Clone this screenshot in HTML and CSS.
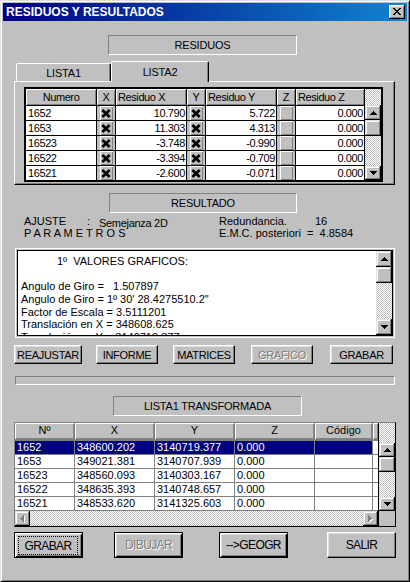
FILE: index.html
```html
<!DOCTYPE html>
<html lang="es">
<head>
<meta charset="utf-8">
<title>RESIDUOS Y RESULTADOS</title>
<link rel="stylesheet" href="styles.css">
</head>
<body>
<div class="window">
  <div class="titlebar">
    <span class="title">RESIDUOS Y RESULTADOS</span>
    <span class="close-btn"><svg width="8" height="7" viewBox="0 0 8 7" shape-rendering="crispEdges"><path d="M0 0h2v1H0zM6 0h2v1H6zM1 1h2v1H1zM5 1h2v1H5zM2 2h4v1H2zM3 3h2v1H3zM2 4h4v1H2zM1 5h2v1H1zM5 5h2v1H5zM0 6h2v1H0zM6 6h2v1H6z" fill="#000"/></svg></span>
  </div>

  <div class="label lbl-residuos">RESIDUOS</div>

  <div class="tabs">
    <div class="tab tab1">LISTA1</div>
    <div class="tab tab2">LISTA2</div>
  </div>
  <div class="panel">
    <div class="grid1">
      <div class="hd c">Numero</div>
      <div class="hd c">X</div>
      <div class="hd">Residuo X</div>
      <div class="hd c">Y</div>
      <div class="hd">Residuo Y</div>
      <div class="hd c">Z</div>
      <div class="hd">Residuo Z</div>
      <div class="vsb vsb1">
        <div class="sb-corner dither"></div>
        <div class="sb-btn up1"><svg width="7" height="4" viewBox="0 0 7 4" shape-rendering="crispEdges"><path d="M3 0h1v1h1v1h1v1h1v1H0V3h1V2h1V1h1z"/></svg></div>
        <div class="sb-thumb th1"></div>
        <div class="sb-track dither"></div>
        <div class="sb-btn dn1"><svg width="7" height="4" viewBox="0 0 7 4" shape-rendering="crispEdges"><path d="M0 0h7v1H6v1H5v1H4v1H3V3H2V2H1V1H0z"/></svg></div>
      </div>

      <div class="cell">1652</div>
      <div class="chk"><span class="box"><svg width="10" height="9" viewBox="0 0 10 9"><path d="M1.3 1L8.7 8M8.7 1L1.3 8" stroke="#000" stroke-width="2.7"/></svg></span></div>
      <div class="cell r">10.790</div>
      <div class="chk"><span class="box"><svg width="10" height="9" viewBox="0 0 10 9"><path d="M1.3 1L8.7 8M8.7 1L1.3 8" stroke="#000" stroke-width="2.7"/></svg></span></div>
      <div class="cell r">5.722</div>
      <div class="chk"><span class="box"></span></div>
      <div class="cell r">0.000</div>

      <div class="cell">1653</div>
      <div class="chk"><span class="box"><svg width="10" height="9" viewBox="0 0 10 9"><path d="M1.3 1L8.7 8M8.7 1L1.3 8" stroke="#000" stroke-width="2.7"/></svg></span></div>
      <div class="cell r">11.303</div>
      <div class="chk"><span class="box"><svg width="10" height="9" viewBox="0 0 10 9"><path d="M1.3 1L8.7 8M8.7 1L1.3 8" stroke="#000" stroke-width="2.7"/></svg></span></div>
      <div class="cell r">4.313</div>
      <div class="chk"><span class="box"></span></div>
      <div class="cell r">0.000</div>

      <div class="cell">16523</div>
      <div class="chk"><span class="box"><svg width="10" height="9" viewBox="0 0 10 9"><path d="M1.3 1L8.7 8M8.7 1L1.3 8" stroke="#000" stroke-width="2.7"/></svg></span></div>
      <div class="cell r">-3.748</div>
      <div class="chk"><span class="box"><svg width="10" height="9" viewBox="0 0 10 9"><path d="M1.3 1L8.7 8M8.7 1L1.3 8" stroke="#000" stroke-width="2.7"/></svg></span></div>
      <div class="cell r">-0.990</div>
      <div class="chk"><span class="box"></span></div>
      <div class="cell r">0.000</div>

      <div class="cell">16522</div>
      <div class="chk"><span class="box"><svg width="10" height="9" viewBox="0 0 10 9"><path d="M1.3 1L8.7 8M8.7 1L1.3 8" stroke="#000" stroke-width="2.7"/></svg></span></div>
      <div class="cell r">-3.394</div>
      <div class="chk"><span class="box"><svg width="10" height="9" viewBox="0 0 10 9"><path d="M1.3 1L8.7 8M8.7 1L1.3 8" stroke="#000" stroke-width="2.7"/></svg></span></div>
      <div class="cell r">-0.709</div>
      <div class="chk"><span class="box"></span></div>
      <div class="cell r">0.000</div>

      <div class="cell">16521</div>
      <div class="chk"><span class="box"><svg width="10" height="9" viewBox="0 0 10 9"><path d="M1.3 1L8.7 8M8.7 1L1.3 8" stroke="#000" stroke-width="2.7"/></svg></span></div>
      <div class="cell r">-2.600</div>
      <div class="chk"><span class="box"><svg width="10" height="9" viewBox="0 0 10 9"><path d="M1.3 1L8.7 8M8.7 1L1.3 8" stroke="#000" stroke-width="2.7"/></svg></span></div>
      <div class="cell r">-0.071</div>
      <div class="chk"><span class="box"></span></div>
      <div class="cell r">0.000</div>
    </div>
  </div>

  <div class="label lbl-resultado">RESULTADO</div>

  <div class="info">
    <div>AJUSTE</div>
    <div>:</div>
    <div class="semej">Semejanza 2D</div>
    <div>Redundancia.</div>
    <div>16</div>
    <div class="params">P A R A M E T R O S</div>
    <div class="emc">E.M.C. posteriori&nbsp;&nbsp;=&nbsp;&nbsp;4.8584</div>
  </div>

  <div class="memo">
    <div class="memo-in">
      <div class="memo-text">
        <div class="ml ind">1º&nbsp;&nbsp;VALORES GRAFICOS:</div>
        <div class="ml">&nbsp;</div>
        <div class="ml">Angulo de Giro =&nbsp;&nbsp;&nbsp;1.507897</div>
        <div class="ml">Angulo de Giro = 1º 30' 28.4275510.2"</div>
        <div class="ml">Factor de Escala = 3.5111201</div>
        <div class="ml">Translación en X = 348608.625</div>
        <div class="ml">Translación en Y = 3140719.377</div>
      </div>
      <div class="vsb memo-sb">
        <div class="sb-btn mup"><svg width="7" height="4" viewBox="0 0 7 4" shape-rendering="crispEdges"><path d="M3 0h1v1h1v1h1v1h1v1H0V3h1V2h1V1h1z"/></svg></div>
        <div class="sb-thumb mth"></div>
        <div class="sb-track dither"></div>
        <div class="sb-btn mdn"><svg width="7" height="4" viewBox="0 0 7 4" shape-rendering="crispEdges"><path d="M0 0h7v1H6v1H5v1H4v1H3V3H2V2H1V1H0z"/></svg></div>
      </div>
    </div>
  </div>

  <div class="btnrow">
    <div class="btn b-reaj">REAJUSTAR</div>
    <div class="btn b-inf">INFORME</div>
    <div class="btn b-mat">MATRICES</div>
    <div class="btn b-gra dis">GRAFICO</div>
    <div class="btn b-grab">GRABAR</div>
  </div>

  <div class="progress"></div>

  <div class="label lbl-lista">LISTA1 TRANSFORMADA</div>

  <div class="grid2">
    <div class="g2-top">
      <div class="g2-table">
        <div class="hd2">Nº</div>
        <div class="hd2">X</div>
        <div class="hd2">Y</div>
        <div class="hd2">Z</div>
        <div class="hd2">Código</div>
        <div class="hd2 extra"></div>

        <div class="d2 sel">1652</div>
        <div class="d2 sel">348600.202</div>
        <div class="d2 sel">3140719.377</div>
        <div class="d2 sel">0.000</div>
        <div class="d2 sel"></div>
        <div class="d2"></div>

        <div class="d2">1653</div>
        <div class="d2">349021.381</div>
        <div class="d2">3140707.939</div>
        <div class="d2">0.000</div>
        <div class="d2"></div>
        <div class="d2"></div>

        <div class="d2">16523</div>
        <div class="d2">348560.093</div>
        <div class="d2">3140303.167</div>
        <div class="d2">0.000</div>
        <div class="d2"></div>
        <div class="d2"></div>

        <div class="d2">16522</div>
        <div class="d2">348635.393</div>
        <div class="d2">3140748.657</div>
        <div class="d2">0.000</div>
        <div class="d2"></div>
        <div class="d2"></div>

        <div class="d2">16521</div>
        <div class="d2">348533.620</div>
        <div class="d2">3141325.603</div>
        <div class="d2">0.000</div>
        <div class="d2"></div>
        <div class="d2"></div>
      </div>
      <div class="vsb vsb2">
        <div class="sb-corner2 dither"></div>
        <div class="sb-btn up2"><svg width="7" height="4" viewBox="0 0 7 4" shape-rendering="crispEdges"><path d="M3 0h1v1h1v1h1v1h1v1H0V3h1V2h1V1h1z"/></svg></div>
        <div class="sb-thumb th2"></div>
        <div class="sb-track dither"></div>
        <div class="sb-btn dn2"><svg width="7" height="4" viewBox="0 0 7 4" shape-rendering="crispEdges"><path d="M0 0h7v1H6v1H5v1H4v1H3V3H2V2H1V1H0z"/></svg></div>
      </div>
    </div>
    <div class="hsb">
      <div class="hsb-main">
        <div class="sb-btn hl"><svg width="5" height="8" viewBox="0 0 5 8" shape-rendering="crispEdges"><path transform="translate(1 1)" fill="#fff" d="M3 0h1v7H3V6H2V5H1V4H0V3h1V2h1V1h1z"/><path fill="#808080" d="M3 0h1v7H3V6H2V5H1V4H0V3h1V2h1V1h1z"/></svg></div>
        <div class="sb-track dither"></div>
        <div class="sb-btn hr"><svg width="5" height="8" viewBox="0 0 5 8" shape-rendering="crispEdges"><path transform="translate(1 1)" fill="#fff" d="M0 0h1v1h1v1h1v1h1v1H3v1H2v1H1v1H0z"/><path fill="#808080" d="M0 0h1v1h1v1h1v1h1v1H3v1H2v1H1v1H0z"/></svg></div>
      </div>
      <div class="hsb-corner"></div>
    </div>
  </div>

  <div class="btnrow2">
    <div class="btn2 framed b2-grab"><span class="focus">GRABAR</span></div>
    <div class="btn2 framed dis b2-dib">DIBUJAR</div>
    <div class="btn2 framed b2-geo">--&gt;GEOGR</div>
    <div class="btn2 b2-sal">SALIR</div>
  </div>
</div>
</body>
</html>
```

FILE: styles.css
```css
* { box-sizing: border-box; }
html, body { margin: 0; padding: 0; }
body {
  width: 410px;
  height: 582px;
  overflow: hidden;
  background: #c0c0c0;
  font-family: "Liberation Sans", Arial, sans-serif;
  font-size: 11px;
  color: #000;
}

.window {
  width: 410px;
  height: 582px;
  background: #c0c0c0;
  border: 1px solid;
  border-color: #dfdfdf #000 #000 #dfdfdf;
  box-shadow: inset 1px 1px #fff, inset -1px -1px #808080;
  padding: 2px;
  display: flex;
  flex-direction: column;
  align-items: flex-start;
}

/* title bar */
.titlebar {
  width: 100%;
  height: 18px;
  flex: none;
  background: linear-gradient(to right, #000080, #1084d0);
  display: flex;
  align-items: center;
  justify-content: space-between;
  padding: 0 2px 0 3px;
}
.title {
  color: #fff;
  font-weight: bold;
  font-size: 12px;
  line-height: 14px;
}
.close-btn {
  width: 16px;
  height: 14px;
  background: #c0c0c0;
  box-shadow: inset -1px -1px #000, inset 1px 1px #fff, inset -2px -2px #808080, inset 2px 2px #dfdfdf;
  display: flex;
  align-items: center;
  justify-content: center;
  padding: 0 0 1px 0;
}
.close-btn svg { display: block; }

/* caption labels */
.label {
  flex: none;
  height: 20px;
  width: 189px;
  border: 1px solid;
  border-color: #808080 #fff #fff #808080;
  text-align: center;
  line-height: 18px;
  letter-spacing: -0.2px;
}
.lbl-residuos { margin: 14px 0 0 105px; }
.lbl-resultado { margin: 8px 0 0 106px; width: 188px; }
.lbl-lista { margin: 11px 0 0 110px; }

/* tabs */
.tabs {
  flex: none;
  display: flex;
  align-items: flex-end;
  height: 20px;
  margin: 6px 0 0 13px;
}
.tab {
  background: #c0c0c0;
  border: 1px solid;
  border-bottom: none;
  border-color: #fff #000 transparent #fff;
  box-shadow: inset -1px 0 #808080;
  border-radius: 2px 2px 0 0;
  text-align: center;
  line-height: 13px;
  letter-spacing: -0.2px;
}
.tab1 { width: 95px; height: 18px; padding-top: 3px; }
.tab2 {
  width: 98px;
  height: 21px;
  margin-bottom: -1px;
  padding-top: 4px;
  position: relative;
  z-index: 1;
}

.panel {
  flex: none;
  margin-left: 11px;
  width: 381px;
  height: 104px;
  border: 1px solid;
  border-color: #fff #000 #000 #fff;
  box-shadow: inset -1px -1px #808080;
  padding: 5px 0 0 9px;
}

/* grid 1 */
.grid1 {
  display: grid;
  grid-template-columns: 70px 18px 70px 18px 70px 18px 68px 16px;
  grid-template-rows: 16px repeat(5, 14px);
  gap: 1px;
  background: #000;
  border: 2px solid #000;
  width: 359px;
  letter-spacing: -0.4px;
}
.hd {
  background: #c0c0c0;
  box-shadow: inset 1px 1px #fff, inset -1px -1px #808080;
  line-height: 16px;
  padding: 0 2px;
  white-space: nowrap;
  overflow: hidden;
}
.c { text-align: center; }
.cell {
  background: #fff;
  padding: 0 2px 0 2px;
  line-height: 14px;
  white-space: nowrap;
  overflow: hidden;
}
.r { text-align: right; padding-right: 1px; }
.chk {
  background: #c0c0c0;
  display: flex;
  justify-content: center;
}
.box {
  width: 13px;
  height: 100%;
  box-shadow: inset 1px 1px #fff, inset -1px -1px #808080;
  display: flex;
  align-items: center;
  justify-content: center;
}
.box svg { display: block; }

/* scrollbars */
.dither {
  background-color: #fff;
  background-image: repeating-conic-gradient(#c0c0c0 0 25%, #fff 0 50%);
  background-size: 2px 2px;
}
.vsb {
  display: flex;
  flex-direction: column;
}
.vsb1 {
  grid-column: 8;
  grid-row: 1 / span 6;
}
.sb-btn, .sb-thumb {
  flex: none;
  background: #c0c0c0;
  box-shadow: inset -1px -1px #000, inset 1px 1px #dfdfdf, inset -2px -2px #808080, inset 2px 2px #fff;
  display: flex;
  align-items: center;
  justify-content: center;
}
.sb-btn svg { display: block; }
.sb-track { flex: 1; }
.sb-corner { height: 16px; flex: none; }
.up1 { height: 15px; }
.th1 { height: 16px; }
.dn1 { height: 14px; }

/* info lines */
.info {
  flex: none;
  display: grid;
  grid-template-columns: 63px 12px 120px 96px 60px;
  grid-template-rows: 12px 12px;
  line-height: 12px;
  margin: 2px 0 0 21px;
  white-space: nowrap;
}
.semej { padding-top: 2px; letter-spacing: -0.3px; }
.params { grid-column: 1 / 4; }
.emc { grid-column: 4 / 6; }

/* memo */
.memo {
  flex: none;
  margin: 9px 0 0 12px;
  width: 380px;
  height: 90px;
  border: 1px solid #fff;
  padding: 1px;
}
.memo-in {
  height: 100%;
  border: 1px solid #000;
  background: #fff;
  display: flex;
}
.memo-text {
  flex: 1;
  overflow: hidden;
  padding: 4px 0 0 3px;
  line-height: 12.7px;
}
.ml { white-space: nowrap; height: 12.7px; }
.ind { padding-left: 36px; }
.memo-sb { width: 16px; flex: none; }
.mup, .mdn { height: 16px; }
.mth { height: 16px; }

/* buttons row */
.btnrow {
  flex: none;
  display: flex;
  margin: 7px 0 0 11px;
}
.btn {
  height: 19px;
  background: #c0c0c0;
  border: 1px solid;
  border-color: #fff #000 #000 #fff;
  box-shadow: inset -1px -1px #808080, inset 1px 1px #dfdfdf;
  text-align: center;
  line-height: 15px;
  padding-top: 2px;
  letter-spacing: -0.3px;
  white-space: nowrap;
}
.dis { color: #808080; text-shadow: 1px 1px #fff; }
.b-reaj { width: 68px; }
.b-inf { width: 62px; margin-left: 14px; }
.b-mat { width: 62px; margin-left: 15px; }
.b-gra { width: 62px; margin-left: 16px; }
.b-grab { width: 63px; margin-left: 17px; }

.progress {
  flex: none;
  margin: 12px 0 0 12px;
  width: 380px;
  height: 9px;
  border: 1px solid;
  border-color: #808080 #fff #fff #808080;
}

/* grid 2 */
.grid2 {
  flex: none;
  margin: 6px 0 0 11px;
  width: 382px;
  height: 105px;
  border: 1px solid;
  border-color: #808080 #000 #000 #808080;
  display: flex;
  flex-direction: column;
}
.g2-top {
  display: flex;
  height: 88px;
  flex: none;
}
.g2-table {
  width: 363px;
  flex: none;
  display: grid;
  grid-template-columns: 59px 79px 79px 79px 57px 5px;
  grid-template-rows: 17px repeat(5, 13px);
  gap: 1px;
  background: #808080;
  padding-bottom: 1px;
}
.hd2 {
  background: #c0c0c0;
  border-bottom: 1px solid #808080;
  box-shadow: inset 1px 1px #fff, inset -1px -1px #808080;
  line-height: 15px;
  text-align: center;
  white-space: nowrap;
  overflow: hidden;
}
.d2 {
  background: #fff;
  line-height: 13px;
  padding-left: 2px;
  white-space: nowrap;
  overflow: hidden;
}
.d2.sel { background: #000080; color: #fff; }
.vsb2 {
  width: 17px;
  flex: none;
  border-left: 1px solid #000;
}
.sb-corner2 { height: 20px; flex: none; }
.up2 { height: 14px; }
.th2 { height: 15px; }
.dn2 { height: 14px; }

.hsb {
  display: flex;
  height: 15px;
  flex: none;
}
.hsb-main {
  width: 363px;
  flex: none;
  display: flex;
}
.hl, .hr { width: 15px; }
.hsb-corner {
  width: 17px;
  flex: none;
  border-left: 1px solid #000;
  background: #c0c0c0;
}

/* bottom buttons */
.btnrow2 {
  flex: none;
  display: flex;
  margin: 5px 0 0 11px;
}
.btn2 {
  width: 69px;
  height: 26px;
  font-size: 12px;
  letter-spacing: -0.6px;
  display: flex;
  align-items: center;
  justify-content: center;
  background: #c0c0c0;
  border: 1px solid;
  border-color: #fff #000 #000 #fff;
  box-shadow: inset -1px -1px #808080, inset 1px 1px #dfdfdf;
  white-space: nowrap;
}
.btn2.framed {
  border-color: #000;
  box-shadow: inset 1px 1px #fff, inset -1px -1px #000, inset 2px 2px #dfdfdf, inset -2px -2px #808080;
}
.focus {
  flex: 1;
  align-self: stretch;
  margin: 3px 4px 2px 3px;
  border: 1px dotted #000;
  display: flex;
  align-items: center;
  justify-content: center;
}
.b2-dib { margin-left: 31px; }
.b2-geo { margin-left: 36px; }
.b2-sal { margin-left: 39px; }
```
